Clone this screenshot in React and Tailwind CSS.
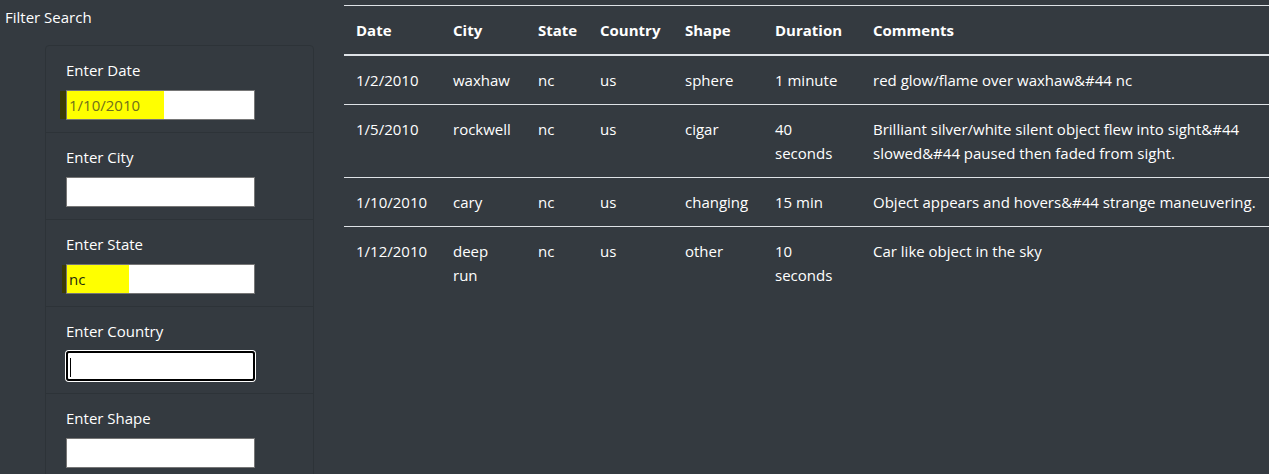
const rows = [
  { date: '1/2/2010', city: 'waxhaw', state: 'nc', country: 'us', shape: 'sphere', duration: '1 minute', comments: 'red glow/flame over waxhaw&#44 nc' },
  { date: '1/5/2010', city: 'rockwell', state: 'nc', country: 'us', shape: 'cigar', duration: '40 seconds', comments: 'Brilliant silver/white silent object flew into sight&#44 slowed&#44 paused then faded from sight.' },
  { date: '1/10/2010', city: 'cary', state: 'nc', country: 'us', shape: 'changing', duration: '15 min', comments: 'Object appears and hovers&#44 strange maneuvering.' },
  { date: '1/12/2010', city: 'deep run', state: 'nc', country: 'us', shape: 'other', duration: '10 seconds', comments: 'Car like object in the sky' },
];

const headers = ['Date', 'City', 'State', 'Country', 'Shape', 'Duration', 'Comments'];

function Item({ label, first, children }) {
  return (
    <li className={`px-5 py-3 ${first ? '' : 'border-t border-[#2d3338]'}`}>
      <label className="block leading-6 mb-2">{label}</label>
      {children}
    </li>
  );
}

function PlainInput() {
  return (
    <input
      readOnly
      className="block w-[189px] h-[30px] border border-[#767676] bg-white px-[2px] text-[15px] text-black outline-none"
    />
  );
}

export default function App() {
  return (
    <div
      className="min-h-screen bg-[#343a40] text-white text-[15px] flex"
      style={{ fontFamily: '"Open Sans", "Noto Sans", sans-serif' }}
    >
      <div className="w-[344px] shrink-0">
        <p className="pl-[5px] pt-[5px] leading-6">Filter Search</p>
        <ul className="ml-[45px] mt-[16px] w-[269px] border border-[#2d3338] rounded-[4px]">
          <Item label="Enter Date" first>
            <div className="relative w-[189px] h-[30px] bg-white">
              <span className="absolute left-[-6px] top-[1px] w-[6px] h-[28px] bg-[#3a3a06]"></span>
              <span className="absolute left-0 top-[1px] w-[98px] h-[28px] bg-[#ffff00]"></span>
              <input
                readOnly
                value="1/10/2010"
                className="relative block w-full h-full border border-[#767676] bg-transparent px-[2px] text-[15px] text-[#70701c] outline-none"
              />
            </div>
          </Item>
          <Item label="Enter City">
            <PlainInput />
          </Item>
          <Item label="Enter State">
            <div className="relative w-[189px] h-[30px] bg-white">
              <span className="absolute left-[-4px] top-[1px] w-[4px] h-[28px] bg-[#3a3a06]"></span>
              <span className="absolute left-0 top-[1px] w-[63px] h-[28px] bg-[#ffff00]"></span>
              <input
                readOnly
                value="nc"
                className="relative block w-full h-full border border-[#767676] bg-transparent px-[2px] text-[15px] text-[#1c2a0c] outline-none"
              />
            </div>
          </Item>
          <Item label="Enter Country">
            <div className="relative w-[189px] h-[30px]">
              <input
                readOnly
                className="block w-full h-full border border-[#767676] bg-white rounded-[3px] px-[2px] text-[15px] text-black outline-2 outline-black outline-offset-[-2px] shadow-[0_0_0_1px_white]"
              />
              <span className="absolute left-[4px] top-[7px] w-px h-[19px] bg-black"></span>
            </div>
          </Item>
          <Item label="Enter Shape">
            <PlainInput />
          </Item>
        </ul>
      </div>
      <div className="flex-1 pt-[5px] min-w-0">
        <table className="w-[925px] table-fixed border-separate border-spacing-0 text-left">
          <colgroup>
            <col className="w-[97px]" />
            <col className="w-[85px]" />
            <col className="w-[62px]" />
            <col className="w-[85px]" />
            <col className="w-[90px]" />
            <col className="w-[98px]" />
            <col className="w-[408px]" />
          </colgroup>
          <thead>
            <tr>
              {headers.map((h) => (
                <th key={h} className="px-3 py-3 leading-6 font-bold align-top border-t border-b-2 border-[#dee2e6]">
                  {h}
                </th>
              ))}
            </tr>
          </thead>
          <tbody>
            {rows.map((r, i) => {
              const b = i < rows.length - 1 ? 'border-b border-[#dee2e6]' : '';
              const cells = [r.date, r.city, r.state, r.country, r.shape, r.duration, r.comments];
              return (
                <tr key={i}>
                  {cells.map((c, j) => (
                    <td key={j} className={`px-3 py-3 leading-6 align-top ${b}`}>
                      {c}
                    </td>
                  ))}
                </tr>
              );
            })}
          </tbody>
        </table>
      </div>
    </div>
  );
}
